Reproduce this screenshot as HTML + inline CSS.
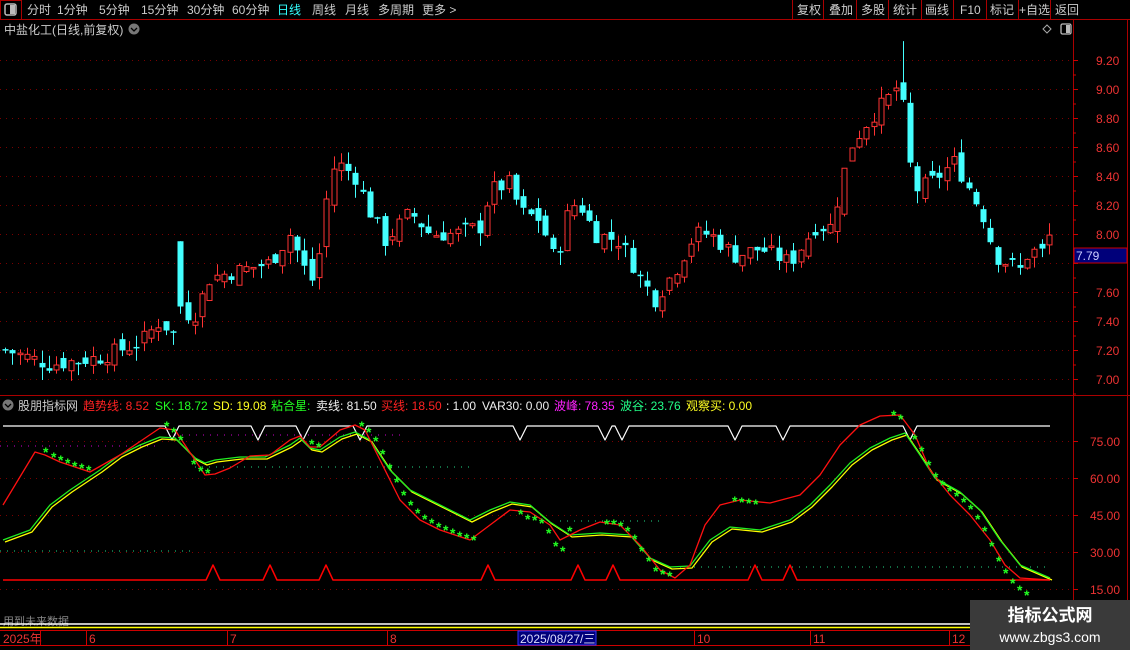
<!DOCTYPE html>
<html><head><meta charset="utf-8">
<style>
html,body{margin:0;padding:0;background:#000;width:1130px;height:650px;overflow:hidden}
body{font-family:"Liberation Sans","Noto Sans CJK SC",sans-serif}
svg{display:block}
</style></head><body>
<svg id="s" width="1130" height="650" xmlns="http://www.w3.org/2000/svg" font-family="Liberation Sans, Noto Sans CJK SC, sans-serif">
<rect width="1130" height="650" fill="#000"/>
<line x1="0" y1="19.5" x2="1130" y2="19.5" stroke="#a00" />
<rect x="0.5" y="0.5" width="21" height="19" fill="none" stroke="#a00"/>
<rect x="5" y="4" width="11" height="11" rx="2" fill="none" stroke="#bbb" stroke-width="1.5"/>
<rect x="10" y="5" width="5" height="9" fill="#bbb"/>
<g font-size="12" fill="#ccc">
<text x="27" y="14">分时</text><text x="57" y="14">1分钟</text><text x="99" y="14">5分钟</text><text x="141" y="14">15分钟</text><text x="187" y="14">30分钟</text><text x="232" y="14">60分钟</text>
<text x="277" y="14" fill="#3ff">日线</text><text x="312" y="14">周线</text><text x="345" y="14">月线</text><text x="378" y="14">多周期</text><text x="422" y="14">更多 &gt;</text>
<text x="797" y="14">复权</text><text x="829" y="14">叠加</text><text x="861" y="14">多股</text><text x="893" y="14">统计</text><text x="925" y="14">画线</text><text x="960" y="14">F10</text><text x="990" y="14">标记</text><text x="1019" y="14">+自选</text><text x="1055" y="14">返回</text>
</g>
<g stroke="#a00">
<line x1="792.5" y1="0" x2="792.5" y2="19"/><line x1="823.5" y1="0" x2="823.5" y2="19"/><line x1="856.5" y1="0" x2="856.5" y2="19"/><line x1="888.5" y1="0" x2="888.5" y2="19"/><line x1="921.5" y1="0" x2="921.5" y2="19"/><line x1="953.5" y1="0" x2="953.5" y2="19"/><line x1="986.5" y1="0" x2="986.5" y2="19"/><line x1="1018.5" y1="0" x2="1018.5" y2="19"/><line x1="1050.5" y1="0" x2="1050.5" y2="19"/>
<line x1="1073.5" y1="19" x2="1073.5" y2="630"/>
<line x1="1127.5" y1="19" x2="1127.5" y2="630"/>
<line x1="0" y1="395.5" x2="1130" y2="395.5"/>
</g>
<text x="4" y="34" font-size="12" fill="#ccc">中盐化工(日线,前复权)</text>
<circle cx="134" cy="29" r="5.5" fill="#777"/><path d="M131 28l3 3 3-3" stroke="#000" fill="none" stroke-width="1.3"/>
<path d="M1047 25l4 4-4 4-4-4z" fill="none" stroke="#aaa"/>
<rect x="1061" y="24" width="10" height="10" rx="1.5" fill="none" stroke="#bbb" stroke-width="1.3"/><rect x="1066" y="25" width="4" height="8" fill="#bbb"/>
<g id="grid"></g>
<g id="candles"></g>
<g font-size="12" fill="#e33" id="axis1"></g>
<rect x="1074" y="248" width="53" height="15" fill="#00007a" stroke="#c00"/>
<text x="1076" y="260" font-size="12" fill="#ccf">7.79</text>
<circle cx="8" cy="405" r="5.5" fill="#777"/><path d="M5 404l3 3 3-3" stroke="#000" fill="none" stroke-width="1.3"/>
<g font-size="12">
<text x="18" y="410" fill="#ccc">股朋指标网</text>
<text x="83" y="410" fill="#f22">趋势线: 8.52</text>
<text x="155" y="410" fill="#2f2">SK: 18.72</text>
<text x="213" y="410" fill="#ff2">SD: 19.08</text>
<text x="271" y="410" fill="#2f2">粘合星:</text>
<text x="316" y="410" fill="#eee">卖线: 81.50</text>
<text x="381" y="410" fill="#f22">买线: 18.50</text>
<text x="446" y="410" fill="#eee">: 1.00</text>
<text x="482" y="410" fill="#eee">VAR30: 0.00</text>
<text x="554" y="410" fill="#f2f">波峰: 78.35</text>
<text x="620" y="410" fill="#2f8">波谷: 23.76</text>
<text x="686" y="410" fill="#ff2">观察买: 0.00</text>
</g>
<g id="ind"></g>
<g font-size="12" fill="#e33">
<text x="1090" y="446">75.00</text><text x="1090" y="483">60.00</text><text x="1090" y="520">45.00</text><text x="1090" y="557">30.00</text><text x="1090" y="594">15.00</text>
</g>
<text x="3" y="625" font-size="11" fill="#888">用到未来数据</text>
<line x1="0" y1="624" x2="970" y2="624" stroke="#fff" stroke-width="1.5"/>
<line x1="0" y1="627.5" x2="970" y2="627.5" stroke="#ff0" stroke-width="1.5"/>
<line x1="0" y1="630.5" x2="1130" y2="630.5" stroke="#c00"/>
<line x1="0" y1="645.5" x2="1130" y2="645.5" stroke="#c00"/>
<g font-size="12" fill="#e33">
<text x="3" y="643">2025年</text><line x1="40.5" y1="631" x2="40.5" y2="645" stroke="#c00"/>
<text x="89" y="643">6</text><line x1="86.5" y1="631" x2="86.5" y2="645" stroke="#c00"/>
<text x="230" y="643">7</text><line x1="227.5" y1="631" x2="227.5" y2="645" stroke="#c00"/>
<text x="390" y="643">8</text><line x1="387.5" y1="631" x2="387.5" y2="645" stroke="#c00"/>
<text x="697" y="643">10</text><line x1="694.5" y1="631" x2="694.5" y2="645" stroke="#c00"/>
<text x="813" y="643">11</text><line x1="810.5" y1="631" x2="810.5" y2="645" stroke="#c00"/>
<text x="952" y="643">12</text><line x1="949.5" y1="631" x2="949.5" y2="645" stroke="#c00"/>
</g>
<rect x="518" y="631" width="78" height="14" fill="#00007a" stroke="#33f"/>
<text x="520" y="643" font-size="12" fill="#ddf">2025/08/27/三</text>
<rect x="970" y="600" width="160" height="50" fill="#3a3a3a"/>
<text x="1050" y="621" font-size="17" font-weight="bold" fill="#fff" text-anchor="middle">指标公式网</text>
<text x="1050" y="642" font-size="14" fill="#fff" text-anchor="middle">www.zbgs3.com</text>
</svg>
<script>
var NS="http://www.w3.org/2000/svg";
function el(p,t,a){var e=document.createElementNS(NS,t);for(var k in a)e.setAttribute(k,a[k]);p.appendChild(e);return e;}
var grid=document.getElementById('grid'),ax=document.getElementById('axis1');
var labels=["9.20","9.00","8.80","8.60","8.40","8.20","8.00","7.80","7.60","7.40","7.20","7.00"];
for(var i=0;i<12;i++){var y=60+i*29;
 el(grid,'line',{x1:0,y1:y+.5,x2:1072,y2:y+.5,stroke:'#7a0000','stroke-dasharray':'1 5'});
 el(grid,'line',{x1:1073,y1:y+.5,x2:1078,y2:y+.5,stroke:'#c00'});
 el(grid,'line',{x1:1073,y1:y+15,x2:1076,y2:y+15,stroke:'#c00'});
 if(i!=7){var t=el(ax,'text',{x:1096,y:y+5});t.textContent=labels[i];}}
function py(p){return 60+(9.2-p)*145;}
var kp=[[5,7.2],[50,7.1],[100,7.15],[140,7.25],[160,7.4],[175,7.3],[180,7.45],[195,7.45],[210,7.7],[240,7.75],[270,7.8],[290,8.0],[305,7.75],[315,7.65],[325,8.2],[335,8.5],[355,8.4],[370,8.15],[385,7.95],[410,8.15],[430,8.0],[455,8.0],[480,8.05],[490,8.3],[510,8.35],[520,8.15],[540,8.1],[555,7.8],[570,8.2],[580,8.2],[595,8.0],[620,7.95],[640,7.7],[655,7.55],[675,7.75],[695,8.0],[710,8.0],[735,7.85],[760,7.9],[790,7.8],[800,7.9],[815,8.05],[830,8.05],[840,8.3],[850,8.6],[870,8.8],[890,8.95],[900,9.05],[908,8.55],[915,8.3],[930,8.35],[955,8.5],[970,8.3],[985,8.1],[995,7.85],[1020,7.75],[1030,7.9],[1040,7.85],[1050,8.0]];
function interp(arr,x){for(var i=1;i<arr.length;i++){if(x<=arr[i][0]){var a=arr[i-1],b=arr[i];return a[1]+(b[1]-a[1])*(x-a[0])/(b[0]-a[0]);}}return arr[arr.length-1][1];}
var seed=7;function rnd(){seed=(seed*9301+49297)%233280;return seed/233280;}
var cg=document.getElementById('candles');var prev=7.2;
for(var x=5;x<=1050;x+=7.3){var c=interp(kp,x)+(rnd()-.5)*0.12;var o=prev+(rnd()-.5)*0.1;
 var hi=Math.max(o,c)+rnd()*0.09,lo=Math.min(o,c)-rnd()*0.09;
 if(x>178&&x<184){o=7.95;c=7.5;hi=7.95;lo=7.45;}
 if(x>896&&x<904){hi=9.33;}
 var up=c>=o,col=up?'#f33':'#4ff',cx=Math.round(x)+.5;
 el(cg,'line',{x1:cx,y1:py(hi),x2:cx,y2:py(lo),stroke:col});
 var t=py(Math.max(o,c)),b=py(Math.min(o,c));if(b-t<1.5)b=t+1.5;
 if(up)el(cg,'rect',{x:cx-2.5,y:t,width:5,height:b-t,fill:'#000',stroke:col});
 else el(cg,'rect',{x:cx-3,y:t,width:6,height:b-t,fill:col});
 prev=c;}
var ig=document.getElementById('ind');
[441,478,515,552,589].forEach(function(y){el(ig,'line',{x1:0,y1:y+.5,x2:1072,y2:y+.5,stroke:'#7a0000','stroke-dasharray':'1 5'});el(ig,'line',{x1:1073,y1:y+.5,x2:1078,y2:y+.5,stroke:'#c00'});});
el(ig,'line',{x1:0,y1:446,x2:160,y2:446,stroke:'#c0c','stroke-dasharray':'1 6'});
el(ig,'line',{x1:175,y1:435,x2:400,y2:435,stroke:'#c0c','stroke-dasharray':'1 6'});
el(ig,'line',{x1:0,y1:551,x2:195,y2:551,stroke:'#2d8','stroke-dasharray':'1 6'});
el(ig,'line',{x1:195,y1:467,x2:475,y2:467,stroke:'#2d8','stroke-dasharray':'1 6'});
el(ig,'line',{x1:560,y1:521,x2:665,y2:521,stroke:'#2d8','stroke-dasharray':'1 6'});
el(ig,'line',{x1:680,y1:567,x2:1050,y2:567,stroke:'#2d8','stroke-dasharray':'1 6'});
function pl(pts,col,w){el(ig,'polyline',{points:pts.map(function(p){return p.join(',')}).join(' '),fill:'none',stroke:col,'stroke-width':w||1.3,'stroke-linejoin':'round'});}
var wv=[172,258,303,360,520,605,622,735,783,910],wp=[[3,426]];
wv.forEach(function(v){wp.push([v-7,426],[v,440],[v+7,426]);});wp.push([1050,426]);pl(wp,'#fff',1.2);
var rv=[213,270,326,488,578,613,755,790],rp=[[3,580]];
rv.forEach(function(v){rp.push([v-7,580],[v,565],[v+7,580]);});rp.push([1050,580]);pl(rp,'#f00',1.5);
var red=[[3,505],[35,452],[45,455],[60,462],[90,472],[120,455],[160,428],[175,430],[195,460],[205,475],[215,474],[230,468],[250,456],[270,455],[290,440],[300,436],[310,447],[320,447],[340,430],[355,425],[365,430],[380,460],[400,500],[420,520],[440,530],[470,540],[490,525],[510,510],[530,512],[550,525],[560,540],[580,530],[600,522],[620,525],[640,545],[660,570],[675,578],[690,565],[705,525],[720,505],[740,500],[770,503],[800,495],[820,475],[840,445],[860,425],[880,416],[900,415],[915,435],[930,470],[950,495],[970,515],[990,540],[1005,565],[1020,578],[1050,580]];
var grn=[[3,540],[30,530],[50,505],[70,490],[85,480],[100,470],[120,455],[140,445],[160,437],[175,438],[195,458],[205,463],[215,460],[240,457],[265,457],[290,445],[300,438],[310,448],[320,450],[340,437],[355,432],[370,440],[390,470],[410,490],[440,505],[470,520],[490,510],[510,502],[530,505],[550,522],[570,535],[600,533],[630,535],[650,558],[670,567],[690,566],[710,540],[730,527],[760,530],[790,520],[810,505],[830,485],[850,463],[870,448],[890,438],[905,433],[920,455],[935,478],[960,492],[980,510],[1000,540],[1020,565],[1050,578]];
pl(grn.map(function(p){return [p[0]+2,p[1]+2]}),'#ff0',1.3);
pl(grn,'#2e2',1.3);
pl(red,'#f11',1.3);
var stars=[[47,451],[55,456],[62,459],[69,462],[76,465],[83,467],[90,469],[168,425],[175,431],[182,439],[195,463],[202,470],[209,472],[313,443],[320,446],[363,425],[370,431],[377,440],[384,453],[391,467],[398,481],[405,494],[412,504],[419,512],[426,518],[433,522],[440,526],[447,529],[454,532],[461,535],[468,537],[475,539],[522,513],[529,518],[536,519],[543,522],[550,532],[557,545],[564,550],[571,530],[608,523],[615,523],[622,525],[629,530],[636,538],[643,550],[650,560],[657,570],[664,573],[671,575],[736,500],[743,501],[750,502],[757,503],[895,414],[902,418],[916,438],[923,450],[930,464],[937,476],[944,484],[951,490],[958,495],[965,501],[972,508],[979,518],[986,530],[993,545],[1000,560],[1007,572],[1014,582],[1021,589],[1028,594]];
stars.forEach(function(s){var t=el(ig,'text',{x:s[0]-4,y:s[1]+6,'font-size':14,fill:'#2f2','font-weight':'bold'});t.textContent='*';});
</script>
</body></html>
